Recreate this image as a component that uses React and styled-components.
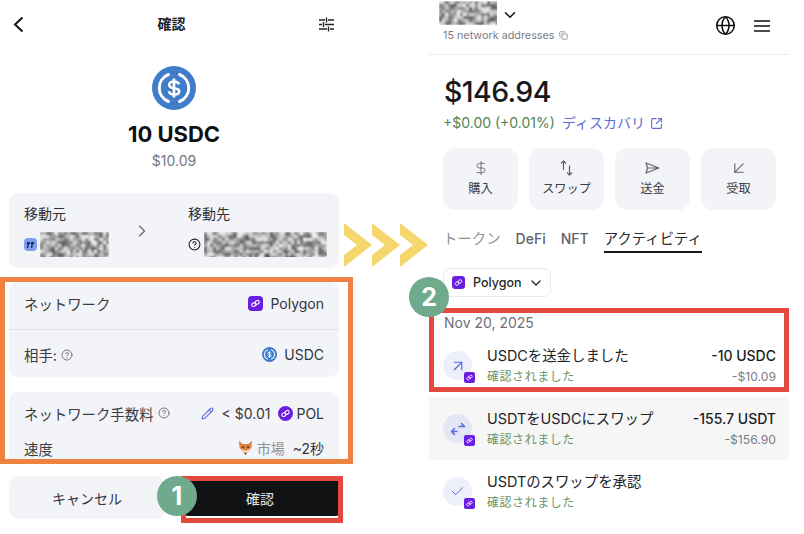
import styled, { createGlobalStyle } from 'styled-components'
import {
  ChevronRight, ChevronDown, Globe, Copy, SquareArrowOutUpRight, DollarSign,
  ArrowDownLeft, ArrowUpRight, Check, Pencil, CircleHelp,
} from 'lucide-react'

const Global = createGlobalStyle`
  html, body { margin: 0; padding: 0; background: #fff; }
  body { font-family: Inter, "Noto Sans CJK JP", sans-serif; color: #17181c; }
`

const Page = styled.div`
  position: relative;
  width: 804px;
  height: 534px;
  overflow: hidden;
  display: grid;
  grid-template-columns: 330px 360px;
  column-gap: 90px;
  padding-left: 9px;
  box-sizing: border-box;
  background: #fff;
`

const Left = styled.section`
  display: flex;
  flex-direction: column;
`

const TopBar = styled.header`
  height: 48px;
  display: grid;
  grid-template-columns: 15px 1fr 15px;
  align-items: center;
  justify-items: center;
  padding: 0 5px 0 2px;
  font-size: 14px;
  font-weight: 600;
  color: #222;
`

const Title = styled.span`
  margin: 0 2px 2px 0;
`

const Hero = styled.div`
  display: flex;
  flex-direction: column;
  align-items: center;
  margin-top: 18px;
`

const Amount = styled.div`
  margin-top: 11px;
  font-size: 22px;
  line-height: 27px;
  font-weight: 700;
  color: #101114;
`

const Fiat = styled.div`
  margin-top: 4px;
  font-size: 14px;
  line-height: 17px;
  color: #74777f;
`

const Card = styled.div`
  background: #f3f4f8;
  border-radius: 9px;
  margin-top: ${p => p.$gap || 0}px;
  height: ${p => p.$h}px;
  ${p => p.$flatBottom && 'border-bottom-left-radius: 0; border-bottom-right-radius: 0;'}
  overflow: hidden;
  box-sizing: border-box;
`

const Transfer = styled.div`
  display: grid;
  grid-template-columns: 103px 61px 1fr;
  padding: 12px 12px 0 15px;
`

const PartyLabel = styled.div`
  font-size: 14px;
  line-height: 18px;
  color: #2e3036;
`

const PartyValue = styled.div`
  display: flex;
  align-items: center;
  gap: 3px;
  margin-top: 9px;
`

const Arrow = styled.div`
  display: flex;
  align-items: center;
  color: #60636b;
  padding-left: 5px;
`

const WalletIcon = styled.div`
  width: 13px;
  height: 13px;
  border-radius: 4px;
  background: #7f9df0;
  display: flex;
  align-items: center;
  justify-content: center;
`

const Row = styled.div`
  display: flex;
  align-items: center;
  justify-content: space-between;
  box-sizing: border-box;
  height: ${p => p.$h}px;
  padding: ${p => p.$pad || '0 15px'};
  font-size: 14.4px;
  color: #33353b;
  ${p => p.$line && 'border-bottom: 1px solid #dfe1e6;'}
`

const RowLabel = styled.span`
  display: flex;
  align-items: center;
  gap: 4px;
  color: #3a3c42;
`

const RowValue = styled.span`
  display: flex;
  align-items: center;
  gap: ${p => p.$gap || 7}px;
  font-size: 14px;
`

const Muted = styled.span`
  color: #8c8e95;
`

const Actions = styled.div`
  display: grid;
  grid-template-columns: 156px 154px;
  column-gap: 20px;
  align-items: center;
  margin-top: 14px;
`

const Cancel = styled.div`
  height: 43px;
  border-radius: 10px;
  background: #f3f4f8;
  display: flex;
  align-items: center;
  justify-content: center;
  font-size: 14px;
  color: #33353b;
`

const Confirm = styled.div`
  height: 37px;
  border-radius: 3px;
  background: #111214;
  display: flex;
  align-items: center;
  justify-content: center;
  padding-right: 4px;
  font-size: 14px;
  color: #e6e6e6;
`

const Right = styled.section`
  display: flex;
  flex-direction: column;
`

const WalletBar = styled.header`
  height: 55px;
  box-sizing: border-box;
  border-bottom: 1px solid #ececee;
  padding: 1px 19px 0 10px;
  display: flex;
  justify-content: space-between;
`

const WalletName = styled.div`
  display: flex;
  align-items: center;
  gap: 4px;
  color: #111;
`

const NameChevron = styled.span`
  display: flex;
  margin-top: 4px;
`

const Addresses = styled.div`
  display: flex;
  align-items: center;
  gap: 4px;
  margin: 4px 0 0 4px;
  font-size: 10.8px;
  line-height: 13px;
  color: #7b7e86;
`

const BarIcons = styled.div`
  display: flex;
  align-items: center;
  gap: 18px;
  color: #111;
  margin-bottom: 4px;
`

const Balance = styled.div`
  margin: 19px 0 0 15px;
  font-size: 28.5px;
  line-height: 36px;
  font-weight: 500;
  letter-spacing: -0.6px;
  color: #17181c;
`

const Change = styled.div`
  display: flex;
  align-items: center;
  gap: 7px;
  margin: 4px 0 0 14px;
  font-size: 14px;
  line-height: 18px;
  color: #53844f;
`

const Discover = styled.span`
  display: flex;
  align-items: center;
  gap: 5px;
  color: #5b6bd8;
`

const QuickGrid = styled.div`
  display: grid;
  grid-template-columns: repeat(4, 75px);
  column-gap: 11px;
  margin: 16px 0 0 14px;
`

const Quick = styled.div`
  height: 62px;
  box-sizing: border-box;
  padding-top: 12px;
  border-radius: 12px;
  background: #f3f4f8;
  display: flex;
  flex-direction: column;
  align-items: center;
  font-size: 12.2px;
  line-height: 17px;
  color: #3c3e44;
`

const QuickIcon = styled.div`
  height: 16px;
  margin-bottom: 4px;
  display: flex;
  align-items: center;
  justify-content: center;
  color: #5f626a;
`

const Tabs = styled.nav`
  display: flex;
  gap: 15px;
  margin: 20px 0 0 14px;
  font-size: 14.4px;
`

const Tab = styled.span`
  padding-bottom: 3px;
  line-height: 18px;
  font-size: ${p => (p.$latin ? '14px' : 'inherit')};
  font-weight: ${p => (p.$latin ? 500 : 400)};
  color: ${p => (p.$active ? '#2a2b30' : p.$latin ? '#5f626a' : '#8e9096')};
  border-bottom: 2px solid ${p => (p.$active ? '#17181c' : 'transparent')};
`

const NetworkPill = styled.div`
  align-self: flex-start;
  display: flex;
  align-items: center;
  gap: 8px;
  height: 29px;
  box-sizing: border-box;
  margin: 15px 0 0 14px;
  padding: 0 6px 0 8px;
  border: 1px solid #e8e9ec;
  border-radius: 7px;
  font-size: 12.5px;
  font-weight: 500;
  color: #26272c;
`

const PillChevron = styled.span`
  display: flex;
  margin-left: -2px;
`

const DateLabel = styled.div`
  margin: 17px 0 2px 15px;
  font-size: 14px;
  line-height: 18px;
  color: #6d7078;
`

const Activity = styled.div`
  display: flex;
  align-items: center;
  height: 63px;
  padding: 0 13px 0 14px;
  background: ${p => (p.$shaded ? '#f6f6f7' : 'transparent')};
  box-sizing: border-box;
`

const ActivityIcon = styled.div`
  position: relative;
  width: 29px;
  height: 29px;
  border-radius: 50%;
  background: ${p => (p.$shaded ? '#e4e6f4' : '#edeffa')};
  color: #5a69dc;
  display: flex;
  align-items: center;
  justify-content: center;
  flex-shrink: 0;
  margin-right: 15px;
`

const ChainBadge = styled.span`
  position: absolute;
  right: -3px;
  bottom: -3px;
  display: flex;
`

const ActivityText = styled.div`
  flex: 1;
  display: flex;
  flex-direction: column;
  gap: 3px;
  padding-top: 1px;
`

const ActivityTitle = styled.div`
  font-size: 14.4px;
  line-height: 18px;
  color: #222328;
`

const ActivityStatus = styled.div`
  font-size: 12px;
  line-height: 17px;
  letter-spacing: 0.55px;
  color: #6d9468;
`

const ActivityAmounts = styled.div`
  display: flex;
  flex-direction: column;
  align-items: flex-end;
  gap: 3px;
  padding-top: 1px;
`

const TokenAmount = styled.div`
  font-size: 14px;
  line-height: 18px;
  font-weight: 500;
  color: #1c1d21;
`

const FiatAmount = styled.div`
  font-size: 12.2px;
  line-height: 17px;
  color: #7a7d85;
`

const Highlight = styled.div`
  position: absolute;
  left: ${p => p.$x}px;
  top: ${p => p.$y}px;
  width: ${p => p.$w}px;
  height: ${p => p.$h}px;
  box-sizing: border-box;
  border: 5px solid ${p => p.$color};
  pointer-events: none;
`

const StepBadge = styled.div`
  position: absolute;
  left: ${p => p.$x}px;
  top: ${p => p.$y}px;
  width: 40px;
  height: 40px;
  border-radius: 50%;
  background: #6faa8c;
  color: #fff;
  font-size: 25px;
  font-weight: 700;
  display: flex;
  align-items: center;
  justify-content: center;
`

const Chevrons = styled.div`
  position: absolute;
  left: 344px;
  top: 223px;
  display: flex;
`

function Mosaic({ w, h }) {
  const cells = []
  const size = 3
  let seed = w * 31 + h
  for (let y = 0; y < h; y += size) {
    for (let x = 0; x < w; x += size) {
      seed = (seed * 9301 + 49297) % 233280
      const v = 80 + Math.floor((seed / 233280) * 165)
      cells.push(<rect key={x + '-' + y} x={x} y={y} width={size} height={size} fill={`rgb(${v},${v},${v})`} />)
    }
  }
  const id = 'soft' + w + h
  return (
    <svg width={w} height={h} viewBox={`0 0 ${w} ${h}`} style={{ display: 'block', flexShrink: 0 }}>
      <filter id={id} x="0" y="0" width="100%" height="100%">
        <feGaussianBlur stdDeviation="0.8" />
      </filter>
      <g filter={`url(#${id})`}>{cells}</g>
    </svg>
  )
}

function UsdcIcon({ size }) {
  return (
    <svg width={size} height={size} viewBox="0 0 44 44">
      <circle cx="22" cy="22" r="22" fill="#3f7cc9" />
      <path d="M16.500 8.500a14.500 14.500 0 0 0 0 27M27.500 8.500a14.500 14.500 0 0 1 0 27" fill="none" stroke="#fff" strokeWidth="3" strokeLinecap="round" />
      <path d="M27 18.500c-.5-2-2.500-3-5-3s-4.800 1.200-4.800 3.400c0 4.800 10 2 10 6.400 0 2.200-2.300 3.300-5 3.300s-4.800-1.200-5.200-3.300M22 12.500v19" fill="none" stroke="#fff" strokeWidth="2.600" />
    </svg>
  )
}

function PolygonIcon({ size = 15, radius = 4 }) {
  return (
    <svg width={size} height={size} viewBox="0 0 16 16">
      <rect width="16" height="16" rx={radius} fill="#6a1fe0" />
      <g fill="none" stroke="#fff" strokeWidth="1.100" transform="rotate(-35 8 8)">
        <rect x="3.600" y="6.200" width="4.800" height="3.600" rx="1.800" />
        <rect x="7.600" y="6.200" width="4.800" height="3.600" rx="1.800" />
      </g>
    </svg>
  )
}

function BackIcon() {
  return (
    <svg width="11" height="17" viewBox="0 0 11 17" fill="none" stroke="#111" strokeWidth="2">
      <path d="M9.500 1.500 2 8.500l7.500 7" />
    </svg>
  )
}

function SlidersIcon() {
  return (
    <svg width="15" height="15" viewBox="0 0 15 15" fill="none" stroke="#222" strokeWidth="1.400">
      <path d="M0 3h6M9 3h6M0 7.500h3M6 7.500h9M0 12h8M11 12h4M7.500 0.500v5M4.500 5v5M9.500 9.500v5" />
    </svg>
  )
}

function MenuIcon() {
  return (
    <svg width="16" height="12" viewBox="0 0 16 12" stroke="#111" strokeWidth="1.700">
      <path d="M0 1h16M0 6h16M0 11h16" />
    </svg>
  )
}

function SwapIcon() {
  return (
    <svg width="13" height="16" viewBox="0 0 13 16" fill="none" stroke="#5f626a" strokeWidth="1.200" strokeLinejoin="round">
      <path d="M3.500 10V1M1 3.500l2.500-2.500 2.500 2.500M9.500 5.500V15M7 12.500l2.500 2.500 2.500-2.500" />
    </svg>
  )
}

function SendIcon() {
  return (
    <svg width="15" height="12" viewBox="0 0 15 12" fill="none" stroke="#5f626a" strokeWidth="1.200" strokeLinejoin="round">
      <path d="M1 1l13 5-13 5 1.500-5zM2.500 6H14" />
    </svg>
  )
}

function ExchangeIcon() {
  return (
    <svg width="16" height="14" viewBox="0 0 16 14" fill="none" stroke="#5a69dc" strokeWidth="1.500" strokeLinecap="round" strokeLinejoin="round">
      <path d="M9 4.500h5.500M11.500 1.500l3 3M7 9.500H1.500M4.500 6.500l-3 3 3 3" />
    </svg>
  )
}

function FoxIcon() {
  return (
    <svg width="15" height="14" viewBox="0 0 15 14">
      <path d="M1 0l3.800 3h5.400L14 0l-.5 6.500L7.500 14l-6-7.500z" fill="#de7f3a" />
      <path d="M3 8l4.500 6L12 8 7.500 9.500z" fill="#f4dcc4" />
      <circle cx="5" cy="6.200" r=".9" fill="#3a2a20" />
      <circle cx="10" cy="6.200" r=".9" fill="#3a2a20" />
      <path d="M6.300 11.800h2.400L7.500 14z" fill="#3a2a20" />
    </svg>
  )
}

function ChevronTrio() {
  return (
    <svg width="84" height="44" viewBox="0 0 84 44" fill="#f5d76e">
      <path d="M0 0 l28 22 -28 22 v-12 l13 -10 -13 -10z" />
      <path d="M28 0 l28 22 -28 22 v-12 l13 -10 -13 -10z" />
      <path d="M56 0 l28 22 -28 22 v-12 l13 -10 -13 -10z" />
    </svg>
  )
}

function ActivityRow({ shaded, title, icon, amount, fiat }) {
  return (
    <Activity $shaded={shaded}>
      <ActivityIcon $shaded={shaded}>
        {icon}
        <ChainBadge><PolygonIcon size={11} radius={3} /></ChainBadge>
      </ActivityIcon>
      <ActivityText>
        <ActivityTitle>{title}</ActivityTitle>
        <ActivityStatus>確認されました</ActivityStatus>
      </ActivityText>
      {amount && (
        <ActivityAmounts>
          <TokenAmount>{amount}</TokenAmount>
          <FiatAmount>{fiat}</FiatAmount>
        </ActivityAmounts>
      )}
    </Activity>
  )
}

export default function App() {
  return (
    <Page>
      <Global />
      <Left>
        <TopBar>
          <BackIcon />
          <Title>確認</Title>
          <SlidersIcon />
        </TopBar>
        <Hero>
          <UsdcIcon size={44} />
          <Amount>10 USDC</Amount>
          <Fiat>$10.09</Fiat>
        </Hero>
        <Card $gap={24} $h={75}>
          <Transfer>
            <div>
              <PartyLabel>移動元</PartyLabel>
              <PartyValue>
                <WalletIcon>
                  <svg width="7" height="6" viewBox="0 0 7 6" fill="#1e2a55">
                    <path d="M0 0h3v2H2v1H0zM4 0h3v2H6v1H4zM0 3.500h2L1 6H0zM4 3.500h2L5 6H4z" />
                  </svg>
                </WalletIcon>
                <Mosaic w={69} h={25} />
              </PartyValue>
            </div>
            <Arrow><ChevronRight size={20} strokeWidth={1.3} /></Arrow>
            <div>
              <PartyLabel>移動先</PartyLabel>
              <PartyValue>
                <CircleHelp size={13} color="#222" />
                <Mosaic w={123} h={25} />
              </PartyValue>
            </div>
          </Transfer>
        </Card>
        <Card $gap={14} $h={95}>
          <Row $h={48} $line $pad="0 15px 5px">
            <RowLabel>ネットワーク</RowLabel>
            <RowValue><PolygonIcon />Polygon</RowValue>
          </Row>
          <Row $h={47} $pad="2px 15px 0">
            <RowLabel>相手: <CircleHelp size={12} color="#777" /></RowLabel>
            <RowValue><UsdcIcon size={15} />USDC</RowValue>
          </Row>
        </Card>
        <Card $gap={15} $h={70} $flatBottom>
          <Row $h={42}>
            <RowLabel>ネットワーク手数料 <CircleHelp size={12} color="#777" /></RowLabel>
            <RowValue $gap={8}>
              <Pencil size={13} color="#5a69dc" />
              <span>&lt; $0.01</span>
              <RowValue $gap={3}><PolygonIcon radius={8} />POL</RowValue>
            </RowValue>
          </Row>
          <Row $h={24} $pad="4px 15px 0">
            <RowLabel>速度</RowLabel>
            <RowValue $gap={4}><FoxIcon /><Muted>市場</Muted>&nbsp;~2秒</RowValue>
          </Row>
        </Card>
        <Actions>
          <Cancel>キャンセル</Cancel>
          <Confirm>確認</Confirm>
        </Actions>
      </Left>
      <Right>
        <WalletBar>
          <div>
            <WalletName>
              <Mosaic w={58} h={24} />
              <NameChevron><ChevronDown size={18} strokeWidth={2} /></NameChevron>
            </WalletName>
            <Addresses>15 network addresses <Copy size={9} /></Addresses>
          </div>
          <BarIcons>
            <Globe size={21} strokeWidth={1.800} />
            <MenuIcon />
          </BarIcons>
        </WalletBar>
        <Balance>$146.94</Balance>
        <Change>
          <span>+$0.00 (+0.01%)</span>
          <Discover>ディスカバリ <SquareArrowOutUpRight size={13} /></Discover>
        </Change>
        <QuickGrid>
          <Quick><QuickIcon><DollarSign size={16} strokeWidth={1.300} /></QuickIcon>購入</Quick>
          <Quick><QuickIcon><SwapIcon /></QuickIcon>スワップ</Quick>
          <Quick><QuickIcon><SendIcon /></QuickIcon>送金</Quick>
          <Quick><QuickIcon><ArrowDownLeft size={20} strokeWidth={1.300} /></QuickIcon>受取</Quick>
        </QuickGrid>
        <Tabs>
          <Tab>トークン</Tab>
          <Tab $latin>DeFi</Tab>
          <Tab $latin>NFT</Tab>
          <Tab $active>アクティビティ</Tab>
        </Tabs>
        <NetworkPill>
          <PolygonIcon size={13} />
          Polygon
          <PillChevron><ChevronDown size={16} strokeWidth={2} /></PillChevron>
        </NetworkPill>
        <DateLabel>Nov 20, 2025</DateLabel>
        <ActivityRow title="USDCを送金しました" amount="-10 USDC" fiat="-$10.09"
          icon={<ArrowUpRight size={18} strokeWidth={1.600} />} />
        <ActivityRow shaded title="USDTをUSDCにスワップ" amount="-155.7 USDT" fiat="-$156.90"
          icon={<ExchangeIcon />} />
        <ActivityRow title="USDTのスワップを承認" icon={<Check size={15} strokeWidth={1.600} />} />
      </Right>

      <Chevrons><ChevronTrio /></Chevrons>
      <Highlight $x={0} $y={277} $w={353} $h={187} $color="#ee8341" />
      <Highlight $x={181} $y={476} $w={162} $h={47} $color="#e4483f" />
      <Highlight $x={429} $y={308} $w={360} $h={84} $color="#e4483f" />
      <StepBadge $x={157} $y={476}>1</StepBadge>
      <StepBadge $x={409} $y={277}>2</StepBadge>
    </Page>
  )
}
